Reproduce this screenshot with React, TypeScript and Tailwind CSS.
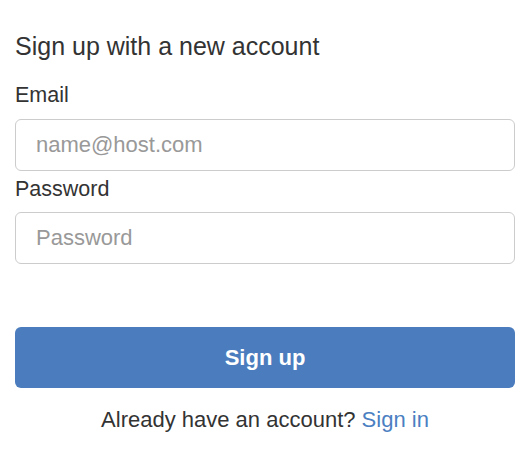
export default function App() {
  return (
    <div className="min-h-[449px] w-[524px] bg-white font-['Liberation_Sans',Arial,sans-serif] text-[#333]">
      <div className="flex w-[530px] flex-col pl-[15px] pt-[31px]">
        <h4 className="text-[25px] leading-[30px]">Sign up with a new account</h4>

        <label className="mt-[22px] text-[21.5px] leading-[24px]">Email</label>
        <input
          type="text"
          placeholder="name@host.com"
          className="mt-[12px] h-[52px] w-[500px] rounded-[6px] border border-[#ccc] px-[20px] text-[22px] text-[#555] placeholder:text-[#999] outline-none"
        />

        <label className="mt-[6px] text-[21.5px] leading-[24px]">Password</label>
        <input
          type="password"
          placeholder="Password"
          className="mt-[11px] h-[52px] w-[500px] rounded-[6px] border border-[#ccc] px-[20px] text-[22px] text-[#555] placeholder:text-[#999] outline-none"
        />

        <button className="mt-[63px] flex h-[61px] w-[500px] items-center justify-center rounded-[6px] bg-[#4a7cbe] text-[22px] font-bold text-white">
          Sign up
        </button>

        <p className="mt-[19px] w-[500px] text-center text-[22px] leading-[26px]">
          Already have an account? <a className="text-[#4b7fc2]">Sign in</a>
        </p>
      </div>
    </div>
  );
}
